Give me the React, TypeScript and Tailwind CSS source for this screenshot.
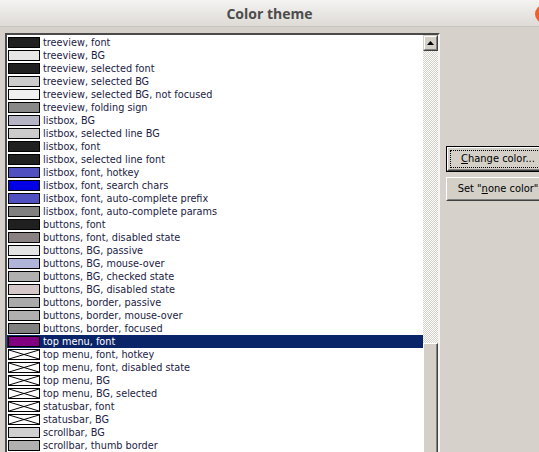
import React from 'react';

type Item = { label: string; color: string | null };

const ITEMS: Item[] = [
  { label: 'treeview, font', color: '#202020' },
  { label: 'treeview, BG', color: '#e6e6e6' },
  { label: 'treeview, selected font', color: '#202020' },
  { label: 'treeview, selected BG', color: '#cccccc' },
  { label: 'treeview, selected BG, not focused', color: '#f0f0f0' },
  { label: 'treeview, folding sign', color: '#888888' },
  { label: 'listbox, BG', color: '#b4b4c4' },
  { label: 'listbox, selected line BG', color: '#cccccc' },
  { label: 'listbox, font', color: '#202020' },
  { label: 'listbox, selected line font', color: '#202020' },
  { label: 'listbox, font, hotkey', color: '#5050c0' },
  { label: 'listbox, font, search chars', color: '#0000e6' },
  { label: 'listbox, font, auto-complete prefix', color: '#5050c0' },
  { label: 'listbox, font, auto-complete params', color: '#808080' },
  { label: 'buttons, font', color: '#202020' },
  { label: 'buttons, font, disabled state', color: '#8a8282' },
  { label: 'buttons, BG, passive', color: '#e4e4e4' },
  { label: 'buttons, BG, mouse-over', color: '#b0b4d8' },
  { label: 'buttons, BG, checked state', color: '#b0b0b0' },
  { label: 'buttons, BG, disabled state', color: '#d6c8c8' },
  { label: 'buttons, border, passive', color: '#aaaaaa' },
  { label: 'buttons, border, mouse-over', color: '#b0b0b0' },
  { label: 'buttons, border, focused', color: '#808080' },
  { label: 'top menu, font', color: '#800080' },
  { label: 'top menu, font, hotkey', color: null },
  { label: 'top menu, font, disabled state', color: null },
  { label: 'top menu, BG', color: null },
  { label: 'top menu, BG, selected', color: null },
  { label: 'statusbar, font', color: null },
  { label: 'statusbar, BG', color: null },
  { label: 'scrollbar, BG', color: '#d0d0d0' },
  { label: 'scrollbar, thumb border', color: '#b0b0b0' },
];

const SELECTED = 23;

function Swatch({ color }: { color: string | null }) {
  if (color === null) {
    return (
      <svg width="32" height="11" className="shrink-0">
        <rect x="0.5" y="0.5" width="31" height="10" fill="#fff" stroke="#000" />
        <line x1="1" y1="1" x2="31" y2="10" stroke="#000" strokeWidth="1" />
        <line x1="31" y1="1" x2="1" y2="10" stroke="#000" strokeWidth="1" />
      </svg>
    );
  }
  return <div className="h-[11px] w-[32px] shrink-0 border border-black" style={{ backgroundColor: color }} />;
}

function ClassicButton({ children, focused }: { children: React.ReactNode; focused?: boolean }) {
  return (
    <div className={`w-[104px] shrink-0 ${focused ? 'border border-black' : ''}`}>
      <div className="border border-t-white border-l-white border-r-[#404040] border-b-[#404040] bg-[#d4d0c8]">
        <div className="border border-t-[#d4d0c8] border-l-[#d4d0c8] border-r-[#808080] border-b-[#808080] p-[2px]">
          <div
            className={`flex h-[16px] items-center justify-center text-[11px] text-black ${
              focused ? 'outline-1 outline-dotted outline-black' : ''
            }`}
          >
            {children}
          </div>
        </div>
      </div>
    </div>
  );
}

export default function App() {
  return (
    <div
      className="flex h-[452px] w-[539px] flex-col overflow-hidden bg-[#d6d2cb]"
      style={{ fontFamily: '"DejaVu Sans Condensed", "DejaVu Sans", sans-serif' }}
    >
      {/* title bar */}
      <div className="relative flex h-[27px] shrink-0 items-center justify-center bg-gradient-to-b from-[#f4f3f1] to-[#dedbd6] border-b border-[#c8c4bd]">
        <span className="font-['Open_Sans'] text-[14px] font-bold text-[#4c4c4c]">Color theme</span>
        <div className="absolute left-[535px] top-[5px] h-[18px] w-[18px] rounded-full bg-[#e9632f]" />
      </div>

      <div className="flex min-h-0 flex-1 gap-[6px] pl-[5px] pt-[6px]">
        {/* list box */}
        <div className="flex h-[430px] w-[435px] shrink-0 border-2 border-t-[#4a4a4a] border-l-[#4a4a4a] border-r-[#f4f4f4] border-b-[#f4f4f4] bg-white">
          <div className="flex w-[416px] flex-col pt-[1px]">
            {ITEMS.map((it, i) => (
              <div
                key={it.label}
                className={`flex h-[13px] shrink-0 items-center gap-[3px] pl-[1px] ${
                  i === SELECTED ? 'bg-[#0a246a] text-white' : 'text-[#1c1c44]'
                }`}
              >
                <Swatch color={it.color} />
                <span className="whitespace-nowrap text-[10.8px] leading-[13px]">{it.label}</span>
              </div>
            ))}
          </div>
          {/* scrollbar */}
          <div className="flex w-[15px] flex-col">
            <div className="border border-t-[#d4d0c8] border-l-[#d4d0c8] border-r-[#404040] border-b-[#404040]">
              <div className="flex h-[14px] items-center justify-center border border-t-white border-l-white border-r-[#808080] border-b-[#808080] bg-[#d4d0c8]">
                <svg width="7" height="4">
                  <polygon points="3.5,0 7,4 0,4" fill="#000" />
                </svg>
              </div>
            </div>
            <div className="h-[292px] bg-[repeating-conic-gradient(#d4d0c8_0_25%,#ffffff_0_50%)] bg-[length:2px_2px]" />
            <div className="flex-1 border border-t-white border-l-white border-r-[#404040] border-b-[#404040] bg-[#d4d0c8]">
              <div className="h-full border-r border-[#808080]" />
            </div>
          </div>
        </div>

        {/* buttons */}
        <div className="flex flex-col gap-[5px] pt-[113px]">
          <ClassicButton focused>
            <span>
              <span className="underline">C</span>hange color...
            </span>
          </ClassicButton>
          <ClassicButton>
            <span className="whitespace-nowrap">
              Set "<span className="underline">n</span>one color"
            </span>
          </ClassicButton>
        </div>
      </div>
    </div>
  );
}
